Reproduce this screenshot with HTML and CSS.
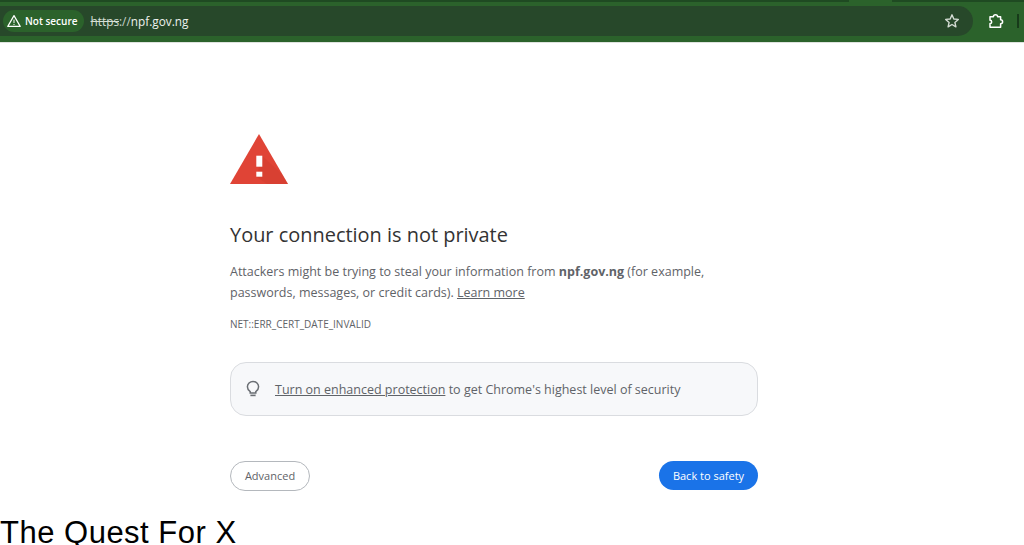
FILE: index.html
```html
<!DOCTYPE html>
<html lang="en">
<head>
  <meta charset="UTF-8">
  <meta name="viewport" content="width=device-width, initial-scale=1.0">
  <title>Privacy error</title>
  <link rel="stylesheet" href="styles.css">
</head>
<body>
  <header class="toolbar">
    <div class="tabstrip"><div class="active-tab"></div></div>
    <div class="toolbar-row">
      <div class="omnibox">
        <div class="chip">
          <svg class="chip-icon" viewBox="0 0 14 14" width="14" height="14">
            <path d="M7 1.6 L13.2 12.4 H0.8 Z" fill="none" stroke="#fff" stroke-width="1.2" stroke-linejoin="round"/>
            <path d="M7 5.6 V9 M7 9.9 V11" fill="none" stroke="#fff" stroke-width="1"/>
          </svg>
          <span>Not secure</span>
        </div>
        <div class="url"><span class="scheme">https</span><span class="slashes">://</span>npf.gov.ng</div>
        <svg class="star" viewBox="0 0 16 16" width="16" height="16">
          <path d="M8 1.8 L9.8 6 L14.3 6.4 L10.9 9.4 L11.9 13.8 L8 11.5 L4.1 13.8 L5.1 9.4 L1.7 6.4 L6.2 6 Z" fill="none" stroke="#d4dcd4" stroke-width="1.4" stroke-linejoin="round"/>
        </svg>
      </div>
      <svg class="puzzle" viewBox="0 0 16 16" width="16" height="16">
        <path d="M2 14.2 V10.6 A1.7 1.7 0 0 0 2 7.2 V3.8 H5.4 A2.1 2.1 0 0 1 9.6 3.8 H12.6 V6.8 A2 2 0 0 1 12.6 10.8 V14.2 Z" fill="none" stroke="#fff" stroke-width="1.5" stroke-linejoin="round"/>
      </svg>
      <div class="toolbar-sep"></div>
    </div>
  </header>

  <main class="interstitial">
    <svg class="warning" viewBox="0 0 58 50" width="58" height="50">
      <path d="M29 0 L58 50 H0 Z" fill="#e04436"/>
      <path d="M32.3 22 L52 40 L58 50 H37 L26.3 42.7 Z" fill="#c8382c" opacity="0.3"/>
      <rect x="26.3" y="21.7" width="6" height="11" fill="#fff"/>
      <rect x="26.3" y="37.7" width="6" height="5" fill="#fff"/>
    </svg>
    <h1>Your connection is not private</h1>
    <p class="message">Attackers might be trying to steal your information from <strong>npf.gov.ng</strong> (for example, passwords, messages, or credit cards). <a href="#">Learn more</a></p>
    <div class="error-code">NET::ERR_CERT_DATE_INVALID</div>
    <div class="promo">
      <svg class="bulb" viewBox="0 0 16 20" width="16" height="20">
        <path d="M5.2 12.6 C3.6 11.5 2.4 9.9 2.4 7.8 C2.4 4.7 4.9 2.4 8 2.4 C11.1 2.4 13.6 4.7 13.6 7.8 C13.6 9.9 12.4 11.5 10.8 12.6 V14 H5.2 Z" fill="none" stroke="#6a6e73" stroke-width="1.5"/>
        <path d="M5.4 16.4 H10.6" stroke="#6a6e73" stroke-width="1.6"/>
      </svg>
      <span><a href="#">Turn on enhanced protection</a> to get Chrome's highest level of security</span>
    </div>
    <div class="actions">
      <button class="btn-advanced">Advanced</button>
      <button class="btn-safety">Back to safety</button>
    </div>
  </main>

  <footer class="caption">The Quest For X</footer>
</body>
</html>
```

FILE: styles.css
```css
body {
  margin: 0;
  height: 545px;
  overflow: hidden;
  background-color: #fff;
  font-family: "Open Sans", "Noto Sans", sans-serif;
  color: #5f6368;
}
.toolbar {
  height: 42px;
  background-color: #2b622b;
  border-bottom: 1px solid #dfe3df;
}
.tabstrip {
  height: 2px;
  background-color: #1f4a22;
}
.active-tab {
  width: 43px;
  height: 2px;
  margin-left: 849px;
  background-color: #2b622b;
}
.toolbar-row {
  display: flex;
  align-items: flex-start;
  padding-top: 4px;
}
.omnibox {
  width: 973px;
  height: 30px;
  display: flex;
  align-items: center;
  background-color: #27482a;
  border-radius: 0 15px 15px 0;
  box-sizing: border-box;
  padding: 0 13px 0 3px;
  flex-shrink: 0;
}
.chip {
  display: flex;
  align-items: center;
  gap: 4px;
  height: 22px;
  padding: 0 6px 0 4px;
  border-radius: 11px;
  background-color: #2b622b;
  color: #fff;
  font-size: 10px;
  font-weight: 600;
}
.url {
  margin-left: 7px;
  color: #eef2ee;
  font-size: 11.8px;
  flex-grow: 1;
}
.scheme {
  text-decoration: line-through;
  color: #d5dfd5;
}
.slashes {
  color: #c9d4c9;
}
.puzzle {
  margin: 7px 0 0 15px;
}
.toolbar-sep {
  width: 2px;
  height: 14px;
  margin: 8px 0 0 13px;
  background-color: #173a1a;
}
.interstitial {
  width: 528px;
  margin: 0 0 0 230px;
  padding-top: 91px;
}
.warning {
  display: block;
}
h1 {
  margin: 37px 0 0 0;
  font-size: 19.95px;
  line-height: 28px;
  font-weight: 400;
  color: #333;
}
.message {
  margin: 12px 0 0 0;
  font-size: 12.5px;
  line-height: 21px;
}
.message strong {
  font-weight: 700;
}
.message a, .promo a {
  color: #5f6368;
}
.error-code {
  margin-top: 14px;
  font-size: 10px;
  line-height: 14px;
}
.promo {
  display: flex;
  align-items: center;
  gap: 14px;
  height: 54px;
  margin-top: 31px;
  padding-left: 14px;
  box-sizing: border-box;
  background-color: #f7f8fa;
  border: 1px solid #dadce0;
  border-radius: 16px;
  font-size: 12.5px;
}
.actions {
  display: flex;
  justify-content: space-between;
  align-items: flex-start;
  margin-top: 45px;
}
button {
  border-radius: 15px;
  font-family: inherit;
  font-size: 11px;
  cursor: pointer;
}
.btn-advanced {
  width: 80px;
  height: 30px;
  padding: 0 0 2px 0;
  background-color: #fff;
  border: 1px solid #b4b8bd;
  color: #5f6368;
}
.btn-safety {
  width: 99px;
  height: 29px;
  padding: 0;
  background-color: #1a73e8;
  border: none;
  color: #fff;
}
.caption {
  margin-top: 29px;
  font-family: "Liberation Sans", Arial, sans-serif;
  font-size: 31px;
  letter-spacing: 0.5px;
  line-height: 26px;
  color: #000;
}
```
